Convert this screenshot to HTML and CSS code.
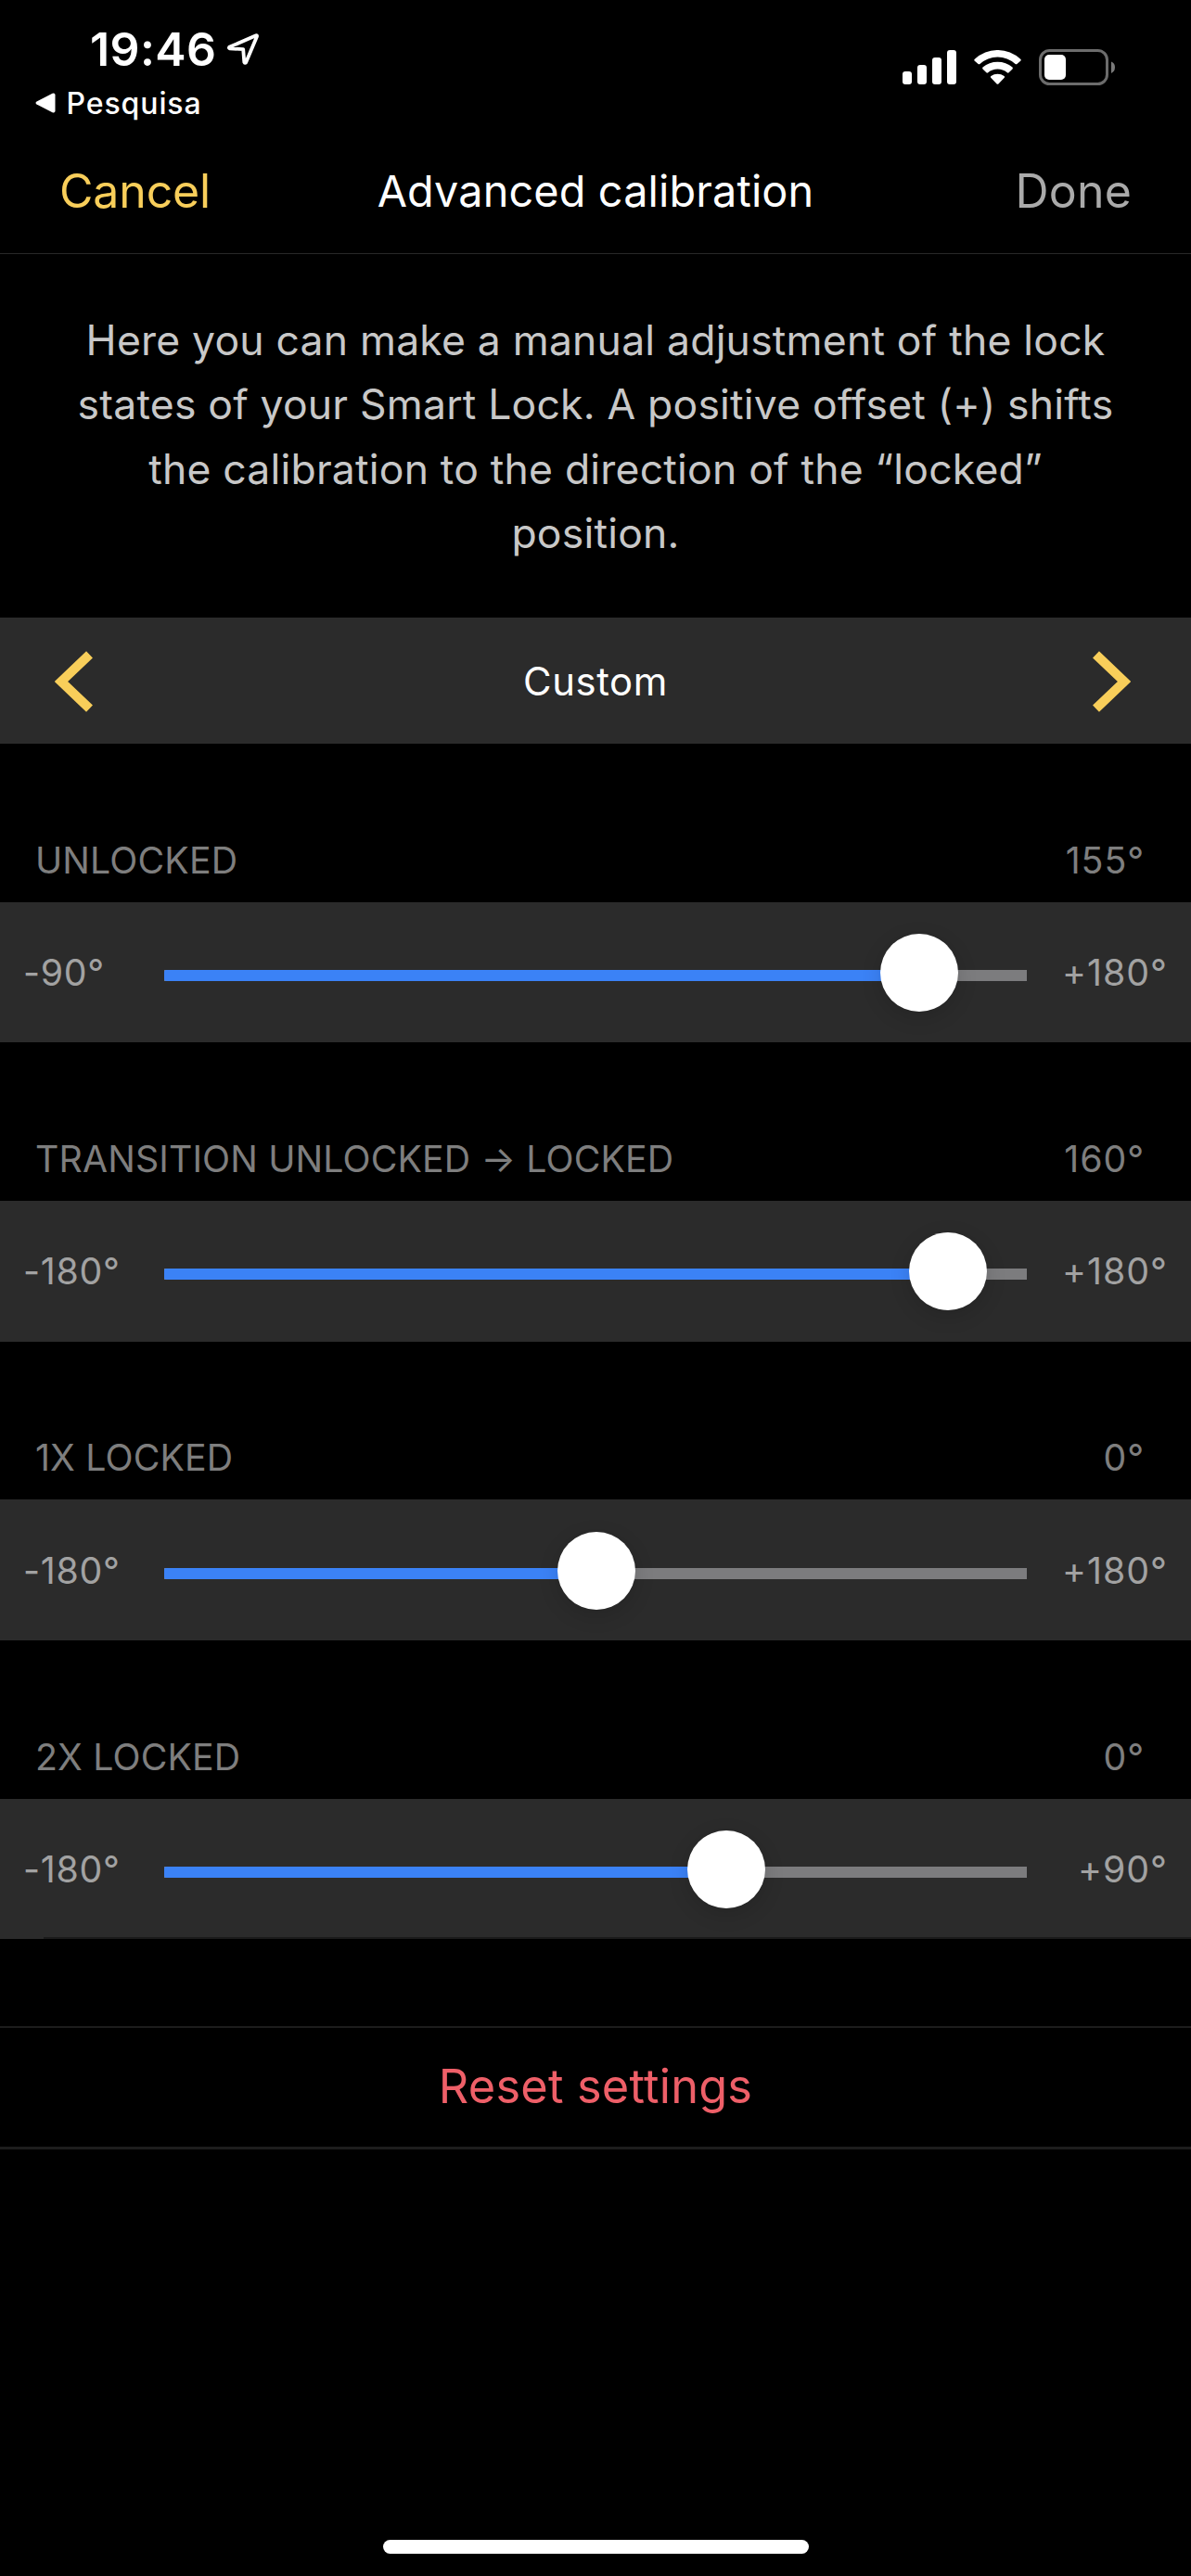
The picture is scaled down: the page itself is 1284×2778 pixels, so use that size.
FILE: index.html
```html
<!DOCTYPE html>
<html lang="en">
<head>
<meta charset="utf-8">
<title>Advanced calibration</title>
<link rel="stylesheet" href="styles.css">
</head>
<body>
<div class="screen">
  <header class="status">
    <div class="status-left">
      <div class="clock">
        <span class="time">19:46</span>
        <svg class="location" width="36" height="36" viewBox="0 0 36 36"><path d="M32 3.200L3.200 15.800Q2.400 17 3.800 17.300L18.200 18.200L19.300 32Q20 33.700 21.200 32.200L33 4.200Q33.200 2.800 32 3.200Z" fill="none" stroke="#fff" stroke-width="3.800" stroke-linejoin="round"/></svg>
      </div>
      <div class="back">
        <svg width="22" height="22" viewBox="0 0 22 22"><path d="M1.500 9.500L18.500 .8Q21.500 0 21.500 2.600V19.400Q21.500 22 18.500 21.200L1.500 12.500Q-.5 11 1.500 9.500Z" fill="#fff"/></svg>
        <span class="back-text">Pesquisa</span>
      </div>
    </div>
    <div class="status-right">
      <svg width="58" height="37" viewBox="0 0 58 37" fill="#fff"><rect y="23" width="10" height="14" rx="3"/><rect x="16" y="16" width="10" height="21" rx="3"/><rect x="32" y="8" width="10" height="29" rx="3"/><rect x="48" width="10" height="37" rx="3"/></svg>
      <svg class="wifi" width="51" height="37" viewBox="0 0 51 37" fill="#fff"><path d="M.8 9.800Q-.3 10.800 .8 11.800L4.600 15.100Q5.500 15.700 6.400 14.900A28.500 28.500 0 0 1 44.600 14.900Q45.500 15.700 46.400 15.100L50.200 11.800Q51.300 10.800 50.200 9.800A36 36 0 0 0 .8 9.800Z"/><path d="M9.500 18.600Q8.700 19.500 9.500 20.400L13.400 24.300Q14.200 25 15.200 24.200A16.500 16.500 0 0 1 35.800 24.200Q36.800 25 37.600 24.300L41.500 20.400Q42.300 19.500 41.500 18.600A24.500 24.500 0 0 0 9.500 18.600Z"/><path d="M18.400 28Q17.400 29 18.400 30L24.600 36.400Q25.500 37.300 26.400 36.400L32.600 30Q33.600 29 32.600 28A12 12 0 0 0 18.400 28Z"/></svg>
      <svg class="battery" width="82" height="39" viewBox="0 0 82 39"><rect x="1.500" y="1.500" width="72" height="36" rx="10" fill="none" stroke="#6c6c6c" stroke-width="3"/><rect x="6" y="6" width="23" height="27" rx="5" fill="#fff"/><path d="M78 13.500Q82 15 82 19.500T78 26Z" fill="#7a7a7a"/></svg>
    </div>
  </header>
  <nav class="nav">
    <span class="nav-cancel">Cancel</span>
    <span class="nav-title">Advanced calibration</span>
    <span class="nav-done">Done</span>
  </nav>
  <p class="intro">Here you can make a manual adjustment of the lock<br>states of your Smart Lock. A positive offset (+) shifts<br>the calibration to the direction of the “locked”<br>position.</p>
  <div class="preset">
    <svg width="41" height="66" viewBox="0 0 41 66"><path d="M37.500 3.800L7 33L37.500 62.200" fill="none" stroke="#f8ce5a" stroke-width="10"/></svg>
    <span class="preset-name">Custom</span>
    <svg width="41" height="66" viewBox="0 0 41 66"><path d="M3.500 3.800L34 33L3.500 62.200" fill="none" stroke="#f8ce5a" stroke-width="10"/></svg>
  </div>
  <section>
    <div class="head"><span class="name">UNLOCKED</span><span class="value">155°</span></div>
    <div class="row">
      <span class="min">-90°</span>
      <div class="slider"><div class="fill" style="width:87.5%"></div><div class="knob" style="left:87.5%"></div></div>
      <span class="max">+180°</span>
    </div>
  </section>
  <section>
    <div class="head"><span class="name">TRANSITION UNLOCKED → LOCKED</span><span class="value">160°</span></div>
    <div class="row">
      <span class="min">-180°</span>
      <div class="slider"><div class="fill" style="width:90.9%"></div><div class="knob" style="left:90.9%"></div></div>
      <span class="max">+180°</span>
    </div>
  </section>
  <section>
    <div class="head"><span class="name">1X LOCKED</span><span class="value">0°</span></div>
    <div class="row">
      <span class="min">-180°</span>
      <div class="slider"><div class="fill" style="width:50.16%"></div><div class="knob" style="left:50.16%"></div></div>
      <span class="max">+180°</span>
    </div>
  </section>
  <section>
    <div class="head"><span class="name">2X LOCKED</span><span class="value">0°</span></div>
    <div class="row row-last">
      <span class="min">-180°</span>
      <div class="slider"><div class="fill" style="width:65.16%"></div><div class="knob" style="left:65.16%"></div></div>
      <span class="max">+90°</span>
    </div>
  </section>
  <div class="reset"><span>Reset settings</span></div>
  <div class="home"></div>
</div>
</body>
</html>
```
FILE: styles.css
```css
* { box-sizing: border-box; }
body { margin: 0; background: #000; }
svg { display: block; flex: none; }

.screen {
  width: 1284px;
  height: 2778px;
  display: flex;
  flex-direction: column;
  background: #000;
  color: #fff;
  font-family: Inter, "Liberation Sans", sans-serif;
  font-kerning: normal;
  white-space: nowrap;
  overflow: hidden;
}

.status {
  height: 138px;
  display: flex;
  justify-content: space-between;
  padding: 23px 82px 0 38px;
}
.clock { display: flex; align-items: center; height: 60px; padding-left: 59px; }
.time { font-size: 50px; font-weight: 600; line-height: 60px; letter-spacing: 0.4px; }
.location { margin-left: 11px; }
.back { display: flex; align-items: center; height: 40px; margin-top: 8px; gap: 11.5px; }
.back-text { font-size: 32px; font-weight: 500; line-height: 40px; letter-spacing: 0.9px; padding-top: 2px; }
.status-right { display: flex; align-items: flex-start; padding-top: 30px; }
.status-right svg { margin-top: 1px; }
.status-right .wifi { margin-left: 19px; }
.status-right .battery { margin: 0 0 0 19px; }

.nav {
  height: 136px;
  display: grid;
  grid-template-columns: 300px 1fr 300px;
  align-items: center;
  padding: 0 64px;
  border-bottom: 1px solid #282828;
  line-height: 60px;
}
.nav-cancel { font-size: 50px; color: #f8ce5a; letter-spacing: -0.17px; }
.nav-title { font-size: 46.8px; text-align: center; letter-spacing: 0.13px; margin: 0 -20px; }
.nav-done { font-size: 50px; color: #aaa; text-align: right; letter-spacing: 0.2px; }

.intro {
  height: 392px;
  margin: 0;
  padding-top: 59px;
  font-size: 44.5px;
  line-height: 69.4px;
  letter-spacing: 0.2px;
  text-align: center;
  color: #c8c8c8;
}

.preset {
  height: 136px;
  display: flex;
  justify-content: space-between;
  align-items: center;
  padding: 1px 65px 0 59px;
  background: #2b2b2b;
}
.preset-name { font-size: 41.8px; letter-spacing: 0.6px; padding-left: 6px; }

.head {
  height: 170.8px;
  display: flex;
  justify-content: space-between;
  align-items: flex-end;
  padding: 0 50px 25px 38px;
  font-size: 39.3px;
  line-height: 40px;
  color: #7e7e7e;
}
.name { letter-spacing: 0.13px; }
.value { letter-spacing: 0.9px; }

.row {
  height: 151.5px;
  display: grid;
  grid-template-columns: 152px 930px 1fr;
  align-items: center;
  padding: 1px 25px 0 25px;
  background: #2b2b2b;
  font-size: 39.3px;
  line-height: 48px;
  color: #a2a2a2;
}
.row-last {
  background: linear-gradient(#1b1b1b, #1b1b1b) 47px 100% / 100% 2px no-repeat, #2b2b2b;
}
.min { letter-spacing: 0.7px; }
.max { text-align: right; letter-spacing: 1px; }
.slider { position: relative; height: 12px; margin-top: 6px; background: #7c7c7e; }
.fill { height: 12px; background: #3b82f6; border-radius: 2px 0 0 2px; }
.knob {
  position: absolute;
  top: -39px;
  width: 84px;
  height: 84px;
  margin-left: -42px;
  border-radius: 50%;
  background: #fff;
  box-shadow: 0 6px 22px rgba(0, 0, 0, 0.14);
}

.reset {
  height: 133px;
  margin-top: 94px;
  padding-bottom: 4px;
  display: flex;
  justify-content: center;
  align-items: center;
  border-top: 2px solid #1d1d1d;
  border-bottom: 3px solid #1d1d1d;
  font-size: 50.5px;
  letter-spacing: 0.2px;
  color: #ee5f68;
}

.home {
  width: 459px;
  height: 15px;
  margin: auto auto 24px;
  border-radius: 8px;
  background: #fff;
}
```
